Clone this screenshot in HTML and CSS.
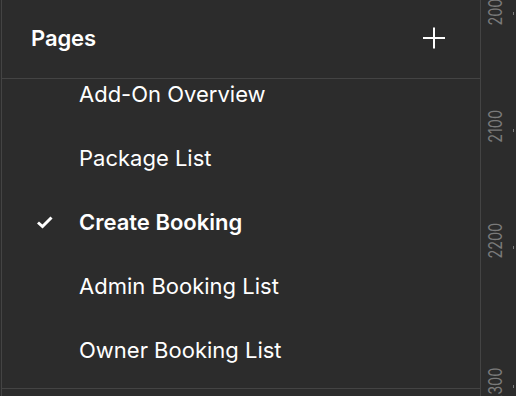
FILE: index.html
```html
<!DOCTYPE html>
<html lang="en">

<head>
    <meta charset="UTF-8">
    <meta name="viewport" content="width=device-width, initial-scale=1.0">
    <title>Pages</title>
    <link rel="stylesheet" href="styles.css">
</head>

<body>
    <div class="layout">
        <div class="pages-panel">
            <div class="panel-header">
                <span class="panel-title">Pages</span>
                <button class="add-page" aria-label="Add page">
                    <svg width="24" height="24" viewBox="0 0 24 24">
                        <path d="M12 1.5 V22.5 M1 12 H23" stroke="#fff" stroke-width="2" fill="none" />
                    </svg>
                </button>
            </div>

            <div class="page-list-viewport">
                <ul class="page-list">
                    <li class="page-item">Add-On Overview</li>
                    <li class="page-item">Package List</li>
                    <li class="page-item current">
                        <svg class="check" width="18" height="14" viewBox="0 0 18 14">
                            <path d="M2 7.5 L6.5 11.5 L15.5 2.5" stroke="#fff" stroke-width="3" fill="none" />
                        </svg>
                        Create Booking
                    </li>
                    <li class="page-item">Admin Booking List</li>
                    <li class="page-item">Owner Booking List</li>
                </ul>
            </div>
        </div>

        <div class="ruler">
            <span class="ruler-label" style="top: -14px">2000</span>
            <span class="ruler-tick" style="top: 12px"></span>
            <span class="ruler-label" style="top: 104px">2100</span>
            <span class="ruler-tick" style="top: 129px"></span>
            <span class="ruler-label" style="top: 219px">2200</span>
            <span class="ruler-tick" style="top: 246px"></span>
            <span class="ruler-label" style="top: 364px">2300</span>
            <span class="ruler-tick" style="top: 385px"></span>
        </div>
    </div>
</body>

</html>
```

FILE: styles.css
```css
* {
    box-sizing: border-box;
}

html,
body {
    margin: 0;
    height: 100%;
    background: #2c2c2c;
    font-family: Inter, "Noto Sans", sans-serif;
    color: #fff;
    overflow: hidden;
}

.layout {
    display: flex;
    height: 396px;
}

.pages-panel {
    width: 479px;
    margin-left: 1px;
    border-left: 1px solid #444;
    display: flex;
    flex-direction: column;
}

.panel-header {
    height: 79px;
    border-bottom: 1px solid #444;
    display: flex;
    align-items: center;
    justify-content: space-between;
    padding: 0 34px 2px 29px;
}

.panel-title {
    font-size: 22px;
    font-weight: 600;
    letter-spacing: -0.1px;
}

.add-page {
    background: none;
    border: none;
    padding: 0;
    width: 24px;
    height: 24px;
    display: flex;
    cursor: pointer;
}

/* list is scrolled a little, so the first row is cut by the header */
.page-list-viewport {
    height: 310px;
    border-bottom: 1px solid #444;
    overflow: hidden;
}

.page-list {
    list-style: none;
    margin: -17px 0 0;
    padding: 0;
}

.page-item {
    position: relative;
    height: 64px;
    display: flex;
    align-items: center;
    padding-left: 77px;
    font-size: 22px;
    font-weight: 400;
}

.page-item.current {
    font-weight: 600;
}

.check {
    position: absolute;
    left: 34px;
    top: 50%;
    margin-top: -7px;
}

.ruler {
    position: relative;
    flex: 1;
    border-left: 1px solid #444;
}

/* ruler digits are narrow, squeeze along the text run */
.ruler-label {
    position: absolute;
    left: 5px;
    height: 44px;
    text-align: center;
    writing-mode: vertical-rl;
    transform: rotate(180deg) scaleY(0.8);
    font-size: 18px;
    line-height: 20px;
    color: #7a7a7a;
}

.ruler-tick {
    position: absolute;
    left: 32px;
    width: 1px;
    height: 3px;
    background: #7a7a7a;
}
```
